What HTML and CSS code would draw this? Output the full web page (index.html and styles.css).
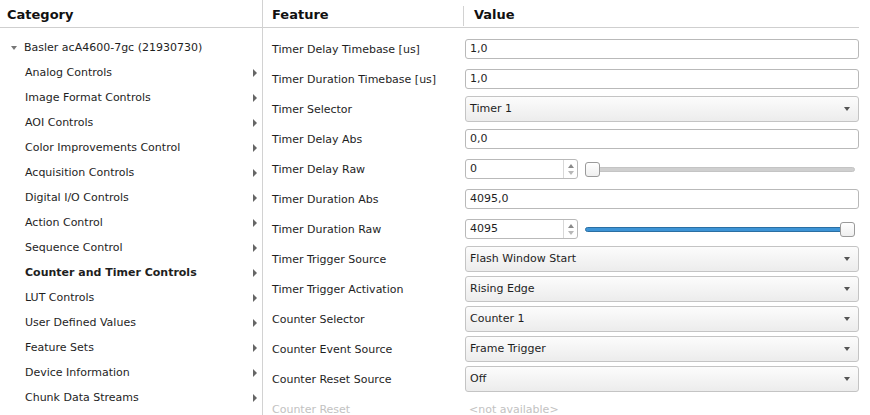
FILE: index.html
```html
<!DOCTYPE html>
<html>
<head>
<meta charset="utf-8">
<link rel="stylesheet" href="styles.css">
</head>
<body>
<div class="app">
  <div class="left">
    <div class="hdr"><span class="hdr-cat">Category</span></div>
    <div class="tree">
      <div class="root"><span class="exp"></span>Basler acA4600-7gc (21930730)</div>
      <div class="item"><span>Analog Controls</span><span class="chev"></span></div>
      <div class="item"><span>Image Format Controls</span><span class="chev"></span></div>
      <div class="item"><span>AOI Controls</span><span class="chev"></span></div>
      <div class="item"><span>Color Improvements Control</span><span class="chev"></span></div>
      <div class="item"><span>Acquisition Controls</span><span class="chev"></span></div>
      <div class="item"><span>Digital I/O Controls</span><span class="chev"></span></div>
      <div class="item"><span>Action Control</span><span class="chev"></span></div>
      <div class="item"><span>Sequence Control</span><span class="chev"></span></div>
      <div class="item sel"><span>Counter and Timer Controls</span><span class="chev"></span></div>
      <div class="item"><span>LUT Controls</span><span class="chev"></span></div>
      <div class="item"><span>User Defined Values</span><span class="chev"></span></div>
      <div class="item"><span>Feature Sets</span><span class="chev"></span></div>
      <div class="item"><span>Device Information</span><span class="chev"></span></div>
      <div class="item"><span>Chunk Data Streams</span><span class="chev"></span></div>
    </div>
  </div>
  <div class="right">
    <div class="hdr rhdr">
      <div class="hc feat">Feature</div>
      <div class="hc val">Value</div>
    </div>
    <div class="rows">
      <div class="row"><div class="lbl">Timer Delay Timebase [us]</div><div class="v"><div class="inp">1,0</div></div></div>
      <div class="row"><div class="lbl">Timer Duration Timebase [us]</div><div class="v"><div class="inp">1,0</div></div></div>
      <div class="row"><div class="lbl">Timer Selector</div><div class="v"><div class="dd">Timer 1<span class="dda"></span></div></div></div>
      <div class="row"><div class="lbl">Timer Delay Abs</div><div class="v"><div class="inp">0,0</div></div></div>
      <div class="row"><div class="lbl">Timer Delay Raw</div><div class="v sv">
        <div class="spin"><span class="spt">0</span><span class="spb"><span class="up"></span><span class="dn"></span></span></div>
        <div class="slider"><div class="groove"></div><div class="handle h0"></div></div>
      </div></div>
      <div class="row"><div class="lbl">Timer Duration Abs</div><div class="v"><div class="inp">4095,0</div></div></div>
      <div class="row"><div class="lbl">Timer Duration Raw</div><div class="v sv">
        <div class="spin"><span class="spt">4095</span><span class="spb"><span class="up"></span><span class="dn"></span></span></div>
        <div class="slider"><div class="groove full"></div><div class="handle h1"></div></div>
      </div></div>
      <div class="row"><div class="lbl">Timer Trigger Source</div><div class="v"><div class="dd">Flash Window Start<span class="dda"></span></div></div></div>
      <div class="row"><div class="lbl">Timer Trigger Activation</div><div class="v"><div class="dd">Rising Edge<span class="dda"></span></div></div></div>
      <div class="row"><div class="lbl">Counter Selector</div><div class="v"><div class="dd">Counter 1<span class="dda"></span></div></div></div>
      <div class="row"><div class="lbl">Counter Event Source</div><div class="v"><div class="dd">Frame Trigger<span class="dda"></span></div></div></div>
      <div class="row"><div class="lbl">Counter Reset Source</div><div class="v"><div class="dd">Off<span class="dda"></span></div></div></div>
      <div class="row dis"><div class="lbl">Counter Reset</div><div class="v"><span class="na">&lt;not available&gt;</span></div></div>
    </div>
  </div>
</div>
</body>
</html>
```

FILE: styles.css
```css
* { box-sizing: border-box; }
html, body { margin: 0; padding: 0; background: #fff; }
body {
  font-family: "DejaVu Sans", sans-serif;
  font-size: 11px;
  color: #1e1e1e;
  width: 870px;
  height: 415px;
  overflow: hidden;
}
.app { display: flex; height: 415px; }
.left {
  width: 263px;
  flex: none;
  border-right: 1px solid #d2d2d2;
}
.hdr {
  height: 28px;
  border-bottom: 1px solid #cfcfcf;
  font-weight: bold;
  font-size: 13px;
  color: #111;
}
.hdr-cat { display: block; padding: 7px 0 0 7px; }
.tree { padding-top: 7px; }
.root {
  height: 25px;
  display: flex;
  align-items: center;
  padding-left: 11px;
}
.exp {
  width: 0; height: 0;
  border-left: 3.5px solid transparent;
  border-right: 3.5px solid transparent;
  border-top: 4px solid #777;
  margin-right: 7px;
  margin-top: 1px;
}
.item {
  height: 25px;
  display: flex;
  align-items: center;
  justify-content: space-between;
  padding-left: 25px;
  padding-right: 5px;
}
.item.sel { font-weight: bold; }
.chev {
  width: 0; height: 0;
  border-top: 4px solid transparent;
  border-bottom: 4px solid transparent;
  border-left: 4px solid #666;
}
.right { flex: 1; padding-right: 11px; }
.rhdr { display: flex; }
.hc { padding-top: 7px; }
.feat { width: 201px; padding-left: 9px; border-right: 1px solid #d2d2d2; margin: 6px 0 1px; padding-top: 1px; }
.val { padding-left: 10px; }
.rows { padding-top: 6px; }
.row { height: 30px; display: flex; align-items: center; }
.lbl { width: 202px; padding-left: 9px; flex: none; }
.v { flex: 1; display: flex; align-items: center; }
.inp {
  width: 100%;
  height: 20px;
  border: 1px solid #b9b9b9;
  border-radius: 3px;
  padding: 0 4px;
  line-height: 18px;
  background: #fff;
}
.dd {
  width: 100%;
  height: 26px;
  border: 1px solid #c4c4c4;
  border-radius: 3px;
  padding: 0 4px;
  line-height: 24px;
  background: linear-gradient(#fcfcfc, #ececec);
  display: flex;
  justify-content: space-between;
  align-items: center;
}
.dda {
  width: 0; height: 0;
  border-left: 3.5px solid transparent;
  border-right: 3.5px solid transparent;
  border-top: 4px solid #555;
  margin-right: 4px;
}
.sv { gap: 7px; }
.spin {
  width: 113px;
  height: 20px;
  border: 1px solid #b9b9b9;
  border-radius: 3px;
  display: flex;
  flex: none;
  background: #fff;
}
.spt { flex: 1; padding: 0 4px; line-height: 18px; }
.spb {
  width: 14px;
  border-left: 1px solid #d8d8d8;
  display: flex;
  flex-direction: column;
  align-items: center;
  justify-content: center;
  gap: 3px;
}
.up {
  width: 0; height: 0;
  border-left: 3px solid transparent;
  border-right: 3px solid transparent;
  border-bottom: 4px solid #8a8a8a;
}
.dn {
  width: 0; height: 0;
  border-left: 3px solid transparent;
  border-right: 3px solid transparent;
  border-top: 4px solid #b8b8b8;
}
.slider {
  flex: 1;
  position: relative;
  height: 16px;
  margin-right: 4px;
}
.groove {
  position: absolute;
  left: 0; right: 0; top: 6px;
  height: 5px;
  border-radius: 3px;
  background: #cfcfcf;
  border: 1px solid #c4c4c4;
}
.groove.full {
  background: #3d94d6;
  border-color: #2b6fa3;
}
.handle {
  position: absolute;
  top: 1px;
  width: 15px;
  height: 15px;
  border: 1px solid #9a9a9a;
  border-radius: 3px;
  background: linear-gradient(#fff, #efefef);
}
.h0 { left: 0; }
.h1 { right: 0; }
.dis { color: #c2c2c2; }
.na { padding-left: 4px; color: #c2c2c2; }
```
